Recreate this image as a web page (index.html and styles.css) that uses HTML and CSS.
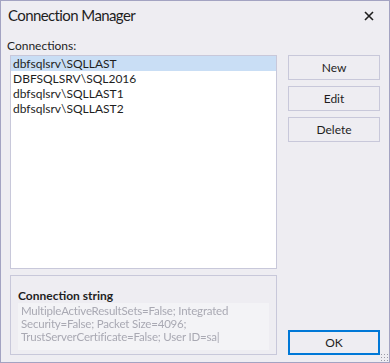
FILE: index.html
```html
<!DOCTYPE html>
<html lang="en">
<head>
  <meta charset="UTF-8">
  <title>Connection Manager</title>
  <link rel="stylesheet" href="styles.css">
</head>
<body>
  <div class="window">
    <div class="titlebar">
      <span class="title">Connection Manager</span>
      <svg class="close" width="10" height="10" viewBox="0 0 10 10">
        <path d="M1 1 L9 9 M9 1 L1 9" stroke="#1e1e1e" stroke-width="1.6"/>
      </svg>
    </div>
    <div class="content">
      <div class="left">
        <div class="label">Connections:</div>
        <ul class="list">
          <li class="selected">dbfsqlsrv\SQLLAST</li>
          <li>DBFSQLSRV\SQL2016</li>
          <li>dbfsqlsrv\SQLLAST1</li>
          <li>dbfsqlsrv\SQLLAST2</li>
        </ul>
        <div class="group">
          <div class="group-title">Connection string</div>
          <div class="conn-text">MultipleActiveResultSets=False; Integrated Security=False; Packet Size=4096; TrustServerCertificate=False; User ID=sa|</div>
        </div>
      </div>
      <div class="right">
        <button class="btn">New</button>
        <button class="btn">Edit</button>
        <button class="btn">Delete</button>
        <button class="btn ok">OK</button>
      </div>
    </div>
    <div class="grip"></div>
  </div>
</body>
</html>
```
FILE: styles.css
```css
body {
  margin: 0;
  font-family: 'Lato', sans-serif;
  font-size: 12px;
  color: #1e1e1e;
}

.window {
  position: relative;
  width: 390px;
  height: 363px;
  box-sizing: border-box;
  border: 1px solid #a3a3c2;
  background-color: #eeedf2;
  display: flex;
  flex-direction: column;
}

.titlebar {
  height: 37px;
  display: flex;
  justify-content: space-between;
  align-items: flex-start;
  padding: 5px 15px 0 7px;
  box-sizing: border-box;
}

.title {
  font-size: 15px;
  line-height: 19px;
  letter-spacing: -0.6px;
}

.close {
  margin-top: 5px;
}

.content {
  flex: 1;
  display: flex;
  gap: 11px;
  padding: 0 9px 7px 9px;
}

.left {
  width: 267px;
  display: flex;
  flex-direction: column;
}

.label {
  height: 17px;
  line-height: 15px;
  margin-left: -3px;
}

.list {
  list-style: none;
  margin: 0;
  padding: 0;
  height: 214px;
  box-sizing: border-box;
  border: 1px solid #c8c8da;
  background-color: #fff;
}

.list li {
  height: 15px;
  line-height: 15px;
  padding-left: 2px;
}

.list li.selected {
  background-color: #c9def5;
}

.group {
  margin-top: 6px;
  flex: 1;
  border: 1px solid #c8c8da;
  padding: 12px 7px 0 7px;
}

.group-title {
  font-weight: bold;
  line-height: 15px;
}

.conn-text {
  background-color: #f3f3f6;
  color: #a9a9b3;
  font-size: 11.5px;
  letter-spacing: -0.2px;
  line-height: 13px;
  padding: 1px 3px 2px 3px;
  height: 44px;
  filter: blur(0.7px);
}

.right {
  width: 92px;
  display: flex;
  flex-direction: column;
  gap: 6px;
  padding-top: 17px;
}

.btn {
  height: 25px;
  box-sizing: border-box;
  border: 1px solid #c8c8da;
  background-color: #eeedf2;
  font-family: 'Lato', sans-serif;
  font-size: 12px;
  color: #1e1e1e;
  padding: 0;
}

.btn.ok {
  margin-top: auto;
  border: 2px solid #0078d7;
}

.grip {
  position: absolute;
  right: 1px;
  bottom: 1px;
  width: 8px;
  height: 8px;
  background-image: radial-gradient(circle, #9a9aa6 0.8px, transparent 1px);
  background-size: 3px 3px;
}
```
